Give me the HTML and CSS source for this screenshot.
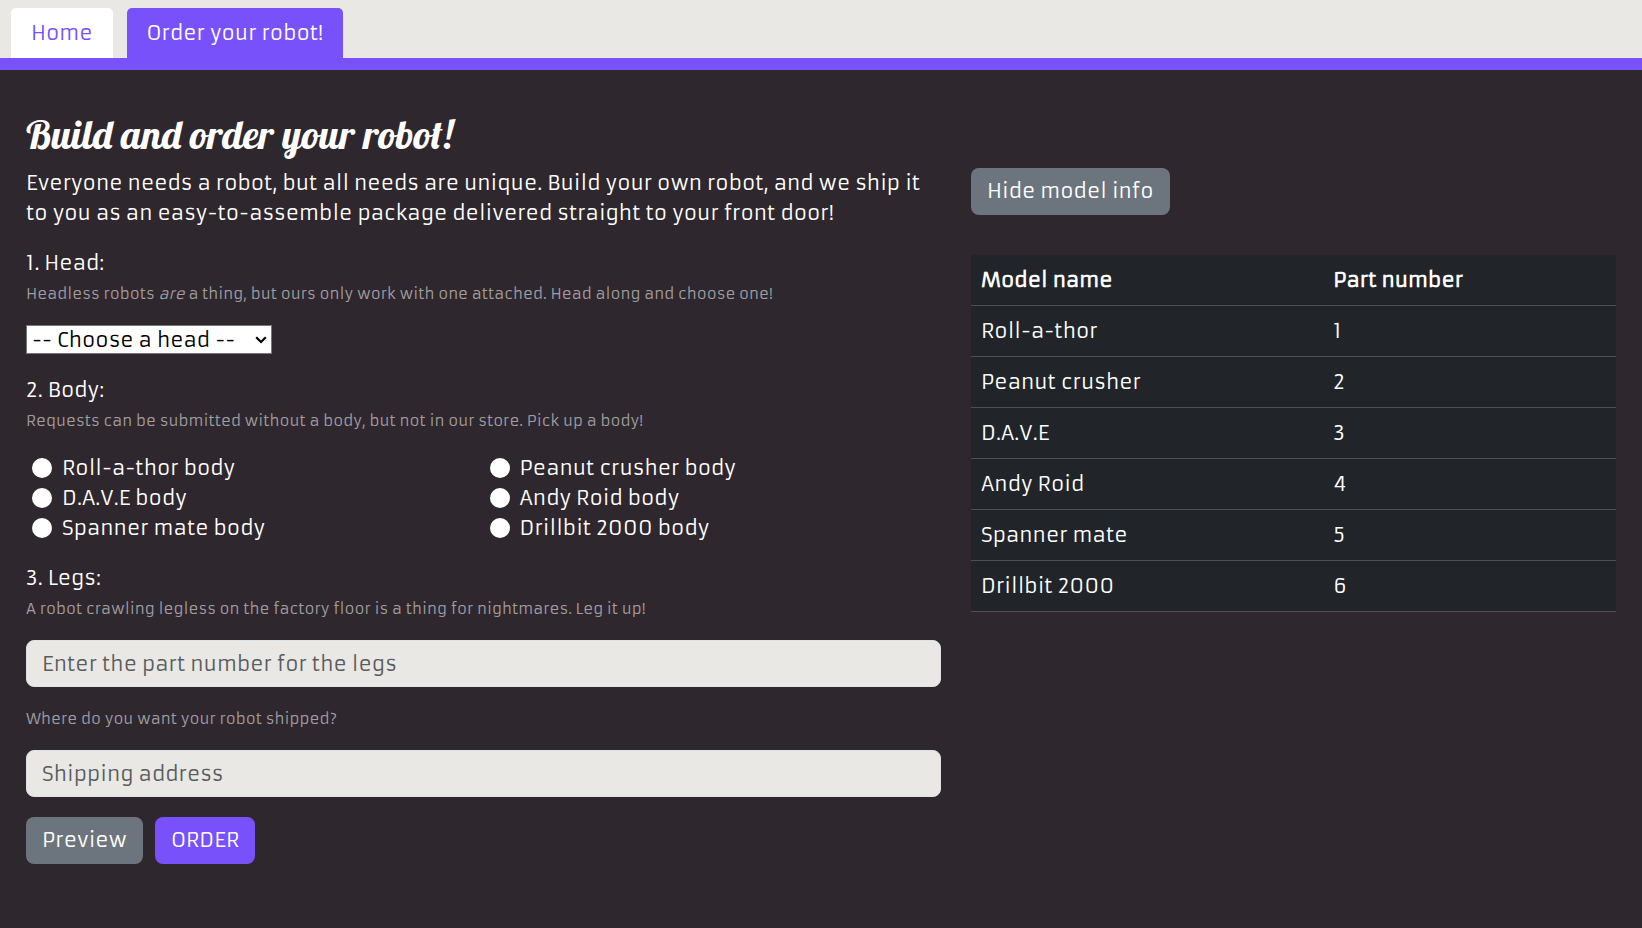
FILE: index.html
```html
<!DOCTYPE html>
<html lang="en">
<head>
<meta charset="utf-8">
<meta name="viewport" content="width=device-width, initial-scale=1">
<title>Build and order your robot!</title>
<link rel="stylesheet" href="styles.css">
</head>
<body>
<header class="site-header">
  <nav class="tabs">
    <a class="tab" href="#home">Home</a>
    <a class="tab tab-active" href="#order" aria-current="page">Order your robot!</a>
  </nav>
</header>
<main class="page">
  <h1 class="title">Build and order your robot!</h1>
  <div class="columns">
    <form class="order-form">
      <p class="intro">Everyone needs a robot, but all needs are unique. Build your own robot, and we ship it to you as an easy-to-assemble package delivered straight to your front door!</p>

      <section class="step">
        <label class="step-label" for="head">1. Head:</label>
        <p class="hint"><small>Headless robots <em>are</em> a thing, but ours only work with one attached. Head along and choose one!</small></p>
        <div class="select-wrap">
          <select class="head-select" id="head">
            <option>-- Choose a head --</option>
            <option>Roll-a-thor head</option>
            <option>Peanut crusher head</option>
            <option>D.A.V.E head</option>
            <option>Andy Roid head</option>
            <option>Spanner mate head</option>
            <option>Drillbit 2000 head</option>
          </select>
          <svg class="chevron" viewBox="0 0 12 8" width="12" height="8" aria-hidden="true"><path d="M1.2 1.2 6 6l4.800-4.800" fill="none" stroke="#000" stroke-width="2.200"/></svg>
        </div>
      </section>

      <section class="step" role="radiogroup" aria-labelledby="body-label">
        <span class="step-label" id="body-label">2. Body:</span>
        <p class="hint hint-body"><small>Requests can be submitted without a body, but not in our store. Pick up a body!</small></p>
        <div class="body-options">
          <label class="option"><input class="radio" type="radio" name="body" value="1">Roll-a-thor body</label>
          <label class="option"><input class="radio" type="radio" name="body" value="2">Peanut crusher body</label>
          <label class="option"><input class="radio" type="radio" name="body" value="3">D.A.V.E body</label>
          <label class="option"><input class="radio" type="radio" name="body" value="4">Andy Roid body</label>
          <label class="option"><input class="radio" type="radio" name="body" value="5">Spanner mate body</label>
          <label class="option"><input class="radio" type="radio" name="body" value="6">Drillbit 2000 body</label>
        </div>
      </section>

      <section class="step step-legs">
        <label class="step-label" for="legs">3. Legs:</label>
        <p class="hint"><small>A robot crawling legless on the factory floor is a thing for nightmares. Leg it up!</small></p>
        <input class="field" id="legs" type="number" placeholder="Enter the part number for the legs">
      </section>

      <section class="step">
        <p class="hint"><small><label for="address">Where do you want your robot shipped?</label></small></p>
        <input class="field" id="address" type="text" placeholder="Shipping address">
      </section>

      <div class="actions">
        <button class="button" type="button">Preview</button>
        <button class="button button-primary" type="submit">ORDER</button>
      </div>
    </form>

    <aside class="model-info">
      <button class="button" type="button">Hide model info</button>
      <table class="models">
        <thead>
          <tr><th scope="col">Model name</th><th scope="col">Part number</th></tr>
        </thead>
        <tbody>
          <tr><td>Roll-a-thor</td><td>1</td></tr>
          <tr><td>Peanut crusher</td><td>2</td></tr>
          <tr><td>D.A.V.E</td><td>3</td></tr>
          <tr><td>Andy Roid</td><td>4</td></tr>
          <tr><td>Spanner mate</td><td>5</td></tr>
          <tr><td>Drillbit 2000</td><td>6</td></tr>
        </tbody>
      </table>
    </aside>
  </div>
</main>
</body>
</html>
```
FILE: styles.css
```css
:root {
  --purple: #7851fa;
  --gray: #6c757d;
  --paper: #e9e8e4;
  --dark: #2f272e;
}

* {
  box-sizing: border-box;
}

body {
  margin: 0;
  background: var(--dark);
  color: #fff;
  font-family: Armata, Share, "Share Tech", Electrolize, Monda, "Exo 2", "Titillium Web", "Open Sans", "Noto Sans", sans-serif;
  font-size: 20px;
  line-height: 30px;
}

button,
input,
select {
  font: inherit;
}

.site-header {
  background: var(--paper);
  border-bottom: 12px solid var(--purple);
}

.tabs {
  display: flex;
  gap: 14px;
  padding: 8px 11px 0;
}

.tab {
  padding: 10px 20px;
  border-radius: 5px 5px 0 0;
  background: #fff;
  color: var(--purple);
  text-decoration: none;
}

.tab-active {
  background: var(--purple);
  color: #fff;
}

.page {
  padding: 40px 26px;
}

.title {
  margin: 0 0 10px;
  font-family: Lobster, "Liberation Serif", serif;
  font-size: 40px;
  font-weight: 500;
  line-height: 48px;
}

.columns {
  display: grid;
  grid-template-columns: minmax(0, 915fr) minmax(0, 645fr);
  column-gap: 30px;
}

.intro {
  margin: 0 0 20px;
}

.step {
  margin-bottom: 20px;
}

.step-legs {
  margin-bottom: 16px;
}

.step-label {
  display: block;
}

.hint {
  margin: 0 0 15px;
  color: #a09ea0;
  font-size: 15px;
  line-height: 32px;
}

.hint-body {
  margin-bottom: 16px;
}

.hint small {
  font-size: 15px;
}

.select-wrap {
  display: inline-grid;
  align-items: center;
  vertical-align: top;
}

.head-select {
  grid-area: 1 / 1;
  appearance: none;
  width: 246px;
  height: 29px;
  padding: 0 20px 0 5px;
  border: 1px solid #767676;
  border-radius: 0;
  background-color: #fff;
  color: #000;
  line-height: 27px;
}

.chevron {
  grid-area: 1 / 1;
  justify-self: end;
  margin-right: 5px;
  pointer-events: none;
}

.body-options {
  display: grid;
  grid-template-columns: 1fr 1fr;
}

.option {
  display: flex;
  align-items: center;
  gap: 10px;
  padding-left: 6px;
}

.radio {
  appearance: none;
  width: 20px;
  height: 20px;
  margin: 0;
  border-radius: 50%;
  background: #fff;
}

.radio:checked {
  border: 6px solid var(--purple);
}

.field {
  display: block;
  width: 100%;
  height: 47px;
  padding: 7px 15px;
  border: 1px solid #dee2e6;
  border-radius: 8px;
  background: var(--paper);
  color: #212529;
}

.field::placeholder {
  color: #5a5c5e;
  opacity: 1;
}

.actions {
  display: flex;
  gap: 12px;
}

.button {
  padding: 8px 16px 9px;
  border: 0;
  border-radius: 8px;
  background: var(--gray);
  color: #fff;
}

.button-primary {
  background: var(--purple);
}

.models {
  width: 100%;
  margin-top: 40px;
  border-collapse: collapse;
  background: #212529;
}

.models th,
.models td {
  padding: 10px;
  border-bottom: 1px solid #4d5154;
  text-align: left;
}

.models th:first-child {
  width: 54.6%;
}
```
